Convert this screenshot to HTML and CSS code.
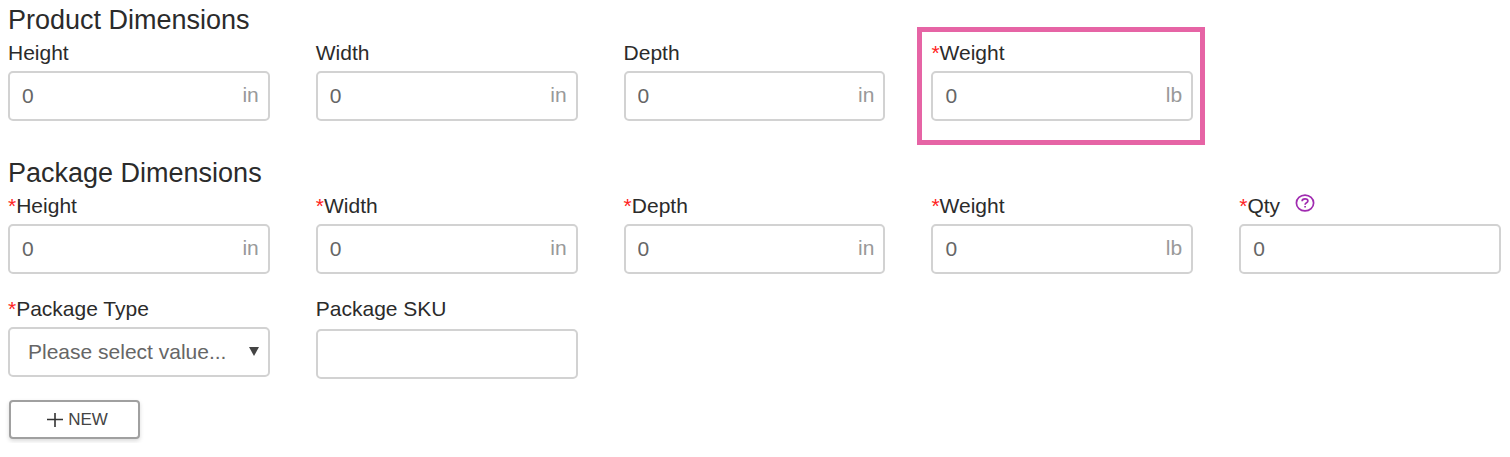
FILE: index.html
```html
<!DOCTYPE html>
<html lang="en">
<head>
<meta charset="utf-8">
<title>Dimensions</title>
<link rel="stylesheet" href="styles.css">
</head>
<body>
<form class="form">
  <section class="section">
    <h2 class="title">Product Dimensions</h2>
    <div class="grid">
      <div class="field">
        <label class="label" for="p-height">Height</label>
        <div class="control"><input class="input" id="p-height" type="text" value="0"><span class="unit">in</span></div>
      </div>
      <div class="field">
        <label class="label" for="p-width">Width</label>
        <div class="control"><input class="input" id="p-width" type="text" value="0"><span class="unit">in</span></div>
      </div>
      <div class="field">
        <label class="label" for="p-depth">Depth</label>
        <div class="control"><input class="input" id="p-depth" type="text" value="0"><span class="unit">in</span></div>
      </div>
      <div class="field field-highlight">
        <label class="label" for="p-weight"><span class="required">*</span>Weight</label>
        <div class="control"><input class="input" id="p-weight" type="text" value="0"><span class="unit">lb</span></div>
      </div>
    </div>
  </section>
  <section class="section">
    <h2 class="title">Package Dimensions</h2>
    <div class="grid">
      <div class="field">
        <label class="label" for="k-height"><span class="required">*</span>Height</label>
        <div class="control"><input class="input" id="k-height" type="text" value="0"><span class="unit">in</span></div>
      </div>
      <div class="field">
        <label class="label" for="k-width"><span class="required">*</span>Width</label>
        <div class="control"><input class="input" id="k-width" type="text" value="0"><span class="unit">in</span></div>
      </div>
      <div class="field">
        <label class="label" for="k-depth"><span class="required">*</span>Depth</label>
        <div class="control"><input class="input" id="k-depth" type="text" value="0"><span class="unit">in</span></div>
      </div>
      <div class="field">
        <label class="label" for="k-weight"><span class="required">*</span>Weight</label>
        <div class="control"><input class="input" id="k-weight" type="text" value="0"><span class="unit">lb</span></div>
      </div>
      <div class="field">
        <label class="label" for="k-qty"><span class="required">*</span>Qty
          <svg class="help" viewBox="0 0 20 18" aria-hidden="true"><ellipse cx="10" cy="9" rx="8.6" ry="7.9"/><path d="M7.1 7.3C7.1 5.7 8.3 4.9 10 4.9s2.9.8 2.9 2.2c0 1.8-2.8 1.6-2.8 3.6M10.1 12v1.6"/></svg>
        </label>
        <div class="control"><input class="input" id="k-qty" type="text" value="0"></div>
      </div>
      <div class="field">
        <label class="label" for="k-type"><span class="required">*</span>Package Type</label>
        <div class="control">
          <select class="input select" id="k-type"><option>Please select value...</option></select>
          <svg class="arrow" viewBox="0 0 10 9" aria-hidden="true"><path d="M0 0h10L5 9z"/></svg>
        </div>
      </div>
      <div class="field field-sku">
        <label class="label" for="k-sku">Package SKU</label>
        <div class="control"><input class="input" id="k-sku" type="text"></div>
      </div>
    </div>
  </section>
  <button class="button" type="button">
    <svg class="plus" viewBox="0 0 16 14" aria-hidden="true"><path d="M0 6.5h16M8 0v14"/></svg>NEW
  </button>
</form>
</body>
</html>
```
FILE: styles.css
```css
* {
  box-sizing: border-box;
}

body {
  margin: 0;
  background: #fff;
  color: #2b2b2b;
  font-family: "Liberation Sans", Arial, sans-serif;
  font-size: 21px;
}

.form {
  padding: 4px 9px 4px 8px;
}

.section + .section {
  margin-top: 36px;
}

.title {
  margin: 0;
  font-size: 27px;
  font-weight: 400;
  line-height: 32px;
}

.grid {
  display: grid;
  grid-template-columns: repeat(5, minmax(0, 1fr));
  align-items: start;
  gap: 18px 46px;
}

.field {
  position: relative;
}

.label {
  display: flex;
  align-items: center;
  margin-bottom: 2px;
  line-height: 33px;
}

.field-sku .label {
  margin-bottom: 4px;
}

.field-highlight::after {
  content: "";
  position: absolute;
  inset: -9px -12px -24px -14px;
  border: 5px solid #e664a5;
  pointer-events: none;
}

.required {
  color: #f22;
}

.control {
  position: relative;
}

.input {
  display: block;
  width: 100%;
  height: 50px;
  margin: 0;
  padding: 0 40px 0 12px;
  border: 2px solid #d2d2d2;
  border-radius: 5px;
  background: #fff;
  color: #666;
  font: inherit;
}

.unit {
  position: absolute;
  top: 0;
  right: 11px;
  color: #999;
  line-height: 48px;
  pointer-events: none;
}

.select {
  padding-bottom: 2px;
  padding-left: 18px;
  appearance: none;
}

.arrow {
  position: absolute;
  top: 20px;
  right: 11px;
  width: 10px;
  height: 9px;
  fill: #444;
  pointer-events: none;
}

.help {
  width: 20px;
  height: 18px;
  margin: 0 0 5px 15px;
  fill: none;
  stroke: #a02bb0;
  stroke-width: 1.7;
}

.button {
  display: flex;
  align-items: center;
  justify-content: center;
  gap: 5px;
  width: 131px;
  height: 39px;
  margin: 21px 1px 0;
  padding: 0 0 0 6px;
  border: 2px solid #a0a0a0;
  border-radius: 4px;
  background: #fff;
  box-shadow: 0 2px 4px rgba(0, 0, 0, 0.15);
  color: #444;
  font: inherit;
  font-size: 17px;
}

.plus {
  width: 16px;
  height: 14px;
  fill: none;
  stroke: #333;
  stroke-width: 1.6;
}
```
